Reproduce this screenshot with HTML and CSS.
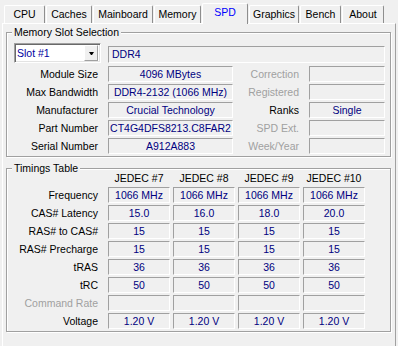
FILE: index.html
```html
<!DOCTYPE html>
<html lang="en">
<head>
    <meta charset="UTF-8">
    <title>CPU-Z - SPD</title>
    <link rel="stylesheet" href="styles.css">
</head>
<body>
    <div class="tabs">
        <div class="tab tab-cpu">CPU</div>
        <div class="tab tab-caches">Caches</div>
        <div class="tab tab-mainboard">Mainboard</div>
        <div class="tab tab-memory">Memory</div>
        <div class="tab tab-spd active">SPD</div>
        <div class="tab tab-graphics">Graphics</div>
        <div class="tab tab-bench">Bench</div>
        <div class="tab tab-about">About</div>
    </div>

    <div class="page">
        <div class="group slot-group">
            <div class="group-title">Memory Slot Selection</div>
            <div class="slot-row">
                <div class="combo">
                    <span class="combo-text">Slot #1</span>
                    <span class="combo-btn">
                        <svg width="5" height="3" viewBox="0 0 5 3"><polygon points="0,0 5,0 3,3 2,3" fill="#000"/></svg>
                    </span>
                </div>
                <div class="field field-type">DDR4</div>
            </div>
            <div class="slot-grid">
                <div class="label">Module Size</div>
                <div class="field">4096 MBytes</div>
                <div class="label off">Correction</div>
                <div class="field"></div>

                <div class="label">Max Bandwidth</div>
                <div class="field">DDR4-2132 (1066 MHz)</div>
                <div class="label off">Registered</div>
                <div class="field"></div>

                <div class="label">Manufacturer</div>
                <div class="field">Crucial Technology</div>
                <div class="label">Ranks</div>
                <div class="field">Single</div>

                <div class="label">Part Number</div>
                <div class="field">CT4G4DFS8213.C8FAR2</div>
                <div class="label off">SPD Ext.</div>
                <div class="field"></div>

                <div class="label">Serial Number</div>
                <div class="field">A912A883</div>
                <div class="label off">Week/Year</div>
                <div class="field"></div>
            </div>
        </div>

        <div class="group timing-group">
            <div class="group-title timing-title">Timings Table</div>
            <div class="timing-grid">
                <div></div>
                <div class="col-head">JEDEC #7</div>
                <div class="col-head">JEDEC #8</div>
                <div class="col-head">JEDEC #9</div>
                <div class="col-head">JEDEC #10</div>

                <div class="label">Frequency</div>
                <div class="field">1066 MHz</div>
                <div class="field">1066 MHz</div>
                <div class="field">1066 MHz</div>
                <div class="field">1066 MHz</div>

                <div class="label">CAS# Latency</div>
                <div class="field">15.0</div>
                <div class="field">16.0</div>
                <div class="field">18.0</div>
                <div class="field">20.0</div>

                <div class="label">RAS# to CAS#</div>
                <div class="field">15</div>
                <div class="field">15</div>
                <div class="field">15</div>
                <div class="field">15</div>

                <div class="label">RAS# Precharge</div>
                <div class="field">15</div>
                <div class="field">15</div>
                <div class="field">15</div>
                <div class="field">15</div>

                <div class="label">tRAS</div>
                <div class="field">36</div>
                <div class="field">36</div>
                <div class="field">36</div>
                <div class="field">36</div>

                <div class="label">tRC</div>
                <div class="field">50</div>
                <div class="field">50</div>
                <div class="field">50</div>
                <div class="field">50</div>

                <div class="label off">Command Rate</div>
                <div class="field"></div>
                <div class="field"></div>
                <div class="field"></div>
                <div class="field"></div>

                <div class="label">Voltage</div>
                <div class="field">1.20 V</div>
                <div class="field">1.20 V</div>
                <div class="field">1.20 V</div>
                <div class="field">1.20 V</div>
            </div>
        </div>
    </div>
</body>
</html>
```

FILE: styles.css
```css
:root {
    --face: #f0f0f0;
    --shadow: #a0a0a0;
    --dark: #696969;
    --value: #000080;
    --disabled: #a0a0a0;
}
* {
    margin: 0;
    padding: 0;
    box-sizing: border-box;
}
body {
    width: 398px;
    height: 346px;
    overflow: hidden;
    background: var(--face);
    font-family: "Liberation Sans", Arial, sans-serif;
    font-size: 10.5px;
    color: #000;
}

/* tab strip */
.tabs {
    display: flex;
    align-items: flex-end;
    height: 23px;
    padding-left: 4px;
}
.tab {
    height: 18px;
    margin-right: 1px;
    border: 1px solid #fff;
    border-right-color: #8e8e8e;
    border-bottom: none;
    border-radius: 2px 2px 0 0;
    line-height: 17px;
    text-align: center;
    white-space: nowrap;
}
.tab.active {
    position: relative;
    z-index: 1;
    height: 21px;
    padding-bottom: 3px;
    margin-bottom: -1px;
    background: var(--face);
    color: #0000ff;
}
.tab-cpu { width: 41px; }
.tab-caches { width: 46px; }
.tab-mainboard { width: 60px; }
.tab-memory { width: 47px; }
.tab-spd { width: 46px; }
.tab-graphics { width: 50px; }
.tab-bench { width: 41px; }
.tab-about { width: 42px; }

/* tab page */
.page {
    width: 394px;
    height: 323px;
    margin-left: 2px;
    border: 1px solid #fff;
    border-right-color: var(--shadow);
    border-bottom: none;
    padding: 8px 0 0 3px;
}

/* etched group boxes */
.group {
    width: 385px;
    border: 1px solid var(--shadow);
    box-shadow: inset 1px 1px 0 #fff, 1px 1px 0 #fff;
    padding-bottom: 2px;
}
.group-title {
    width: max-content;
    margin: -7px 0 0 5px;
    padding: 0 2px;
    line-height: 13px;
    background: var(--face);
}
.timing-group {
    margin-top: 11px;
}
.timing-title {
    margin-bottom: -3px;
}

/* label / value grids */
.slot-grid {
    display: grid;
    grid-template-columns: 91px 125px 56px 76px;
    grid-auto-rows: 16px;
    column-gap: 10px;
    row-gap: 2px;
    margin-top: 3px;
}
.timing-grid {
    display: grid;
    grid-template-columns: 98px repeat(4, 62px);
    grid-template-rows: 13px;
    grid-auto-rows: 16px;
    column-gap: 3px;
    row-gap: 2px;
}
.timing-grid .label {
    padding-right: 7px;
}
.col-head {
    line-height: 13px;
    text-align: center;
    white-space: nowrap;
}
.label {
    line-height: 16px;
    text-align: right;
    white-space: nowrap;
}
.label.off {
    color: var(--disabled);
}
.field {
    height: 16px;
    border: 1px solid #fff;
    border-top-color: var(--shadow);
    border-left-color: var(--shadow);
    line-height: 14px;
    text-align: center;
    color: var(--value);
    white-space: nowrap;
    overflow: hidden;
}

/* slot row */
.slot-row {
    display: flex;
    align-items: flex-end;
    margin: 4px 0 0 7px;
}
.combo {
    display: flex;
    align-items: center;
    width: 87px;
    height: 20px;
    background: #fff;
    border: 1px solid #fff;
    border-top-color: var(--shadow);
    border-left-color: var(--shadow);
    box-shadow: inset 1px 1px 0 var(--dark), inset -1px -1px 0 #e3e3e3;
}
.combo-text {
    flex: 1;
    padding-left: 2px;
    color: #0000a0;
    white-space: nowrap;
}
.combo-btn {
    display: flex;
    align-items: center;
    justify-content: center;
    width: 14px;
    height: 16px;
    margin-right: 2px;
    background: var(--face);
    border: 1px solid var(--shadow);
    border-top-color: #fff;
    border-left-color: #fff;
}
.field.field-type {
    width: 277px;
    height: 17px;
    margin-left: 7px;
    padding-left: 3px;
    line-height: 15px;
    text-align: left;
}
```
